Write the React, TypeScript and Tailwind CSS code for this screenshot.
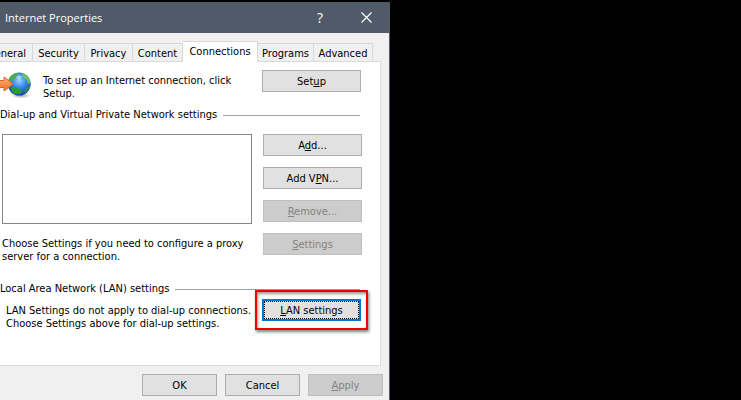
import type { ReactNode } from 'react'

const tabs = [
  { name: 'General', size: 'w-[33px] justify-end pr-1.5' },
  { name: 'Security', size: 'w-[52px] justify-center' },
  { name: 'Privacy', size: 'w-12 justify-center' },
  { name: 'Content', size: 'w-[50px] justify-center' },
  { name: 'Connections', size: 'w-[75px] justify-center' },
  { name: 'Programs', size: 'w-14 justify-center' },
  { name: 'Advanced', size: 'w-[59px] justify-center' },
]

type ButtonProps = { children: ReactNode; disabled?: boolean; className?: string }

const Button = ({ children, disabled, className = 'w-[99px]' }: ButtonProps) => (
  <button
    type="button"
    disabled={disabled}
    className={`h-[22px] shrink-0 border leading-[13px] ${className} ${
      disabled ? 'border-[#bfbfbf] bg-[#cccccc] text-[#838383]' : 'border-[#adadad] bg-[#e1e1e1]'
    }`}
  >
    {children}
  </button>
)

const GroupTitle = ({ children }: { children: ReactNode }) => (
  <div className="flex items-center gap-1.5 pr-5">
    <h2 className="whitespace-nowrap leading-[14px]">{children}</h2>
    <div className="h-px flex-1 bg-[#a0a0a0]" />
  </div>
)

const Globe = () => (
  <svg width="32" height="30" viewBox="0 0 32 30" className="shrink-0" aria-hidden="true">
    <defs>
      <radialGradient id="sea" cx="0.5" cy="0.35" r="0.65">
        <stop offset="0" stopColor="#9ad2ff" />
        <stop offset="0.45" stopColor="#3a8cec" />
        <stop offset="1" stopColor="#173f9c" />
      </radialGradient>
      <linearGradient id="arrow" x1="0" y1="0" x2="0" y2="1">
        <stop offset="0" stopColor="#ffb27c" />
        <stop offset="1" stopColor="#ee6c1c" />
      </linearGradient>
      <radialGradient id="shade">
        <stop offset="0" stopColor="#777" stopOpacity="0.7" />
        <stop offset="1" stopColor="#777" stopOpacity="0" />
      </radialGradient>
    </defs>
    <ellipse cx="21" cy="25.500" rx="10" ry="3" fill="url(#shade)" />
    <circle cx="19.200" cy="14" r="11.500" fill="url(#sea)" />
    <path d="M9 10c1-4 4-6 8-7l2 1-2 2-1 2-3 1-2 3-2 1z" fill="#49b040" />
    <path d="M22 3l4 2c3 2 4 5 4 8l-2 1-1-4-3-2-2-2z" fill="#6cc458" />
    <path d="M11 18l4-1 4 2 3 3-2 2-5 0c-2-1-4-3-4-6z" fill="#25a02c" />
    <path d="M27 17l3-1c-1 4-3 6-5 7l-1-2z" fill="#2d8c4d" />
    <path d="M16 7l3-2 3 2-3 3z" fill="#c4eafa" opacity="0.6" />
    <path d="M-4 10.500h8V7l9 7-9 7v-3.500h-8z" fill="url(#arrow)" stroke="#d9632b" />
  </svg>
)

const TitleBar = () => (
  <header className="flex h-[31px] items-center bg-[#505a68] pl-[5px] text-white">
    <h1 className="flex-1 font-['Open_Sans','Noto_Sans',sans-serif]">Internet Properties</h1>
    <button type="button" aria-label="Help" className="h-full w-[46px] font-['Open_Sans',sans-serif] text-sm">
      ?
    </button>
    <button type="button" aria-label="Close" className="flex h-full w-[46px] items-center justify-center">
      <svg width="11" height="11" viewBox="0 0 11 11" stroke="currentColor" strokeWidth="1.2" aria-hidden="true">
        <path d="M.5.5l10 10M10.500.5l-10 10" />
      </svg>
    </button>
  </header>
)

const Tabs = () => (
  <div role="tablist" className="flex items-end">
    {tabs.map(({ name, size }) => {
      const active = name === 'Connections'
      return (
        <button
          key={name}
          type="button"
          role="tab"
          aria-selected={active}
          className={`flex overflow-hidden whitespace-nowrap border-r border-t border-[#d9d9d9] ${size} ${
            active ? 'h-[21px] bg-white pt-[3px]' : 'h-[19px] border-b bg-[#f0f0f0] pt-[3px]'
          }`}
        >
          {name}
        </button>
      )
    })}
    <div className="h-px flex-1 bg-[#d9d9d9]" />
  </div>
)

export default function App() {
  return (
    <main className="h-screen overflow-hidden bg-black pt-0.5 font-['DejaVu_Sans_Condensed','Noto_Sans',sans-serif] text-[11px] leading-[13px] text-black">
      <section className="w-[390px] border-r border-[#505a68] bg-[#f0f0f0]">
        <TitleBar />
        <div className="pr-2 pt-2">
          <Tabs />
          <div className="border-b border-r border-[#dcdcdc] bg-white pb-[35px]">
            <div className="flex h-[46px] items-start justify-between pr-[19px] pt-2">
              <Globe />
              <p className="flex-1 pl-[11px] pt-1">
                To set up an Internet connection, click
                <br />
                Setup.
              </p>
              <Button>
                Set<u>u</u>p
              </Button>
            </div>

            <GroupTitle>Dial-up and Virtual Private Network settings</GroupTitle>
            <div className="flex justify-between pl-0.5 pr-[18px] pt-3">
              <div className="flex w-[250px] flex-col gap-[13px]">
                <select
                  multiple
                  aria-label="Dial-up and Virtual Private Network settings"
                  className="h-[90px] w-full appearance-none border border-[#828790] bg-white"
                />
                <p className="whitespace-nowrap">
                  Choose Settings if you need to configure a proxy
                  <br />
                  server for a connection.
                </p>
              </div>
              <div className="flex flex-col gap-[11px]">
                <Button>
                  A<u>d</u>d...
                </Button>
                <Button>
                  Add V<u>P</u>N...
                </Button>
                <Button disabled>
                  <u>R</u>emove...
                </Button>
                <Button disabled>
                  <u>S</u>ettings
                </Button>
              </div>
            </div>

            <div className="pt-[19px]">
              <GroupTitle>Local Area Network (LAN) settings</GroupTitle>
            </div>
            <div className="flex items-start justify-between pl-1.5 pr-[19px] pt-[3px]">
              <p className="whitespace-nowrap pt-[5px]">
                LAN Settings do not apply to dial-up connections.
                <br />
                Choose Settings above for dial-up settings.
              </p>
              <div className="relative">
                <button
                  type="button"
                  className="h-[22px] w-[99px] border-2 border-[#0078d7] bg-[#e1e1e1] leading-[13px] outline-1 -outline-offset-3 outline-dotted outline-black"
                >
                  <u>L</u>AN settings
                </button>
                <div className="pointer-events-none absolute -inset-x-[7px] -inset-y-[9px] border-2 border-[#f00000] shadow-[1px_2px_3px_#00000080,inset_1px_2px_3px_#00000066]" />
              </div>
            </div>
          </div>
        </div>
        <footer className="flex justify-end gap-2 pb-3 pr-1.5 pt-2">
          <Button className="w-[75px]">OK</Button>
          <Button className="w-[75px]">Cancel</Button>
          <Button className="w-[75px]" disabled>
            <u>A</u>pply
          </Button>
        </footer>
      </section>
    </main>
  )
}
